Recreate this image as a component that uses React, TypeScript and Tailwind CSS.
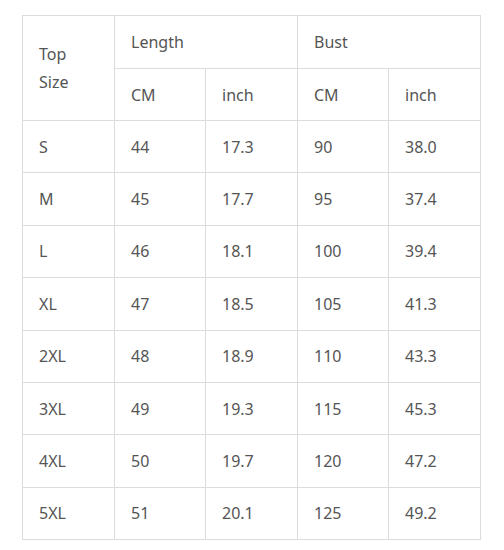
const rows = [
  ["S", "44", "17.3", "90", "38.0"],
  ["M", "45", "17.7", "95", "37.4"],
  ["L", "46", "18.1", "100", "39.4"],
  ["XL", "47", "18.5", "105", "41.3"],
  ["2XL", "48", "18.9", "110", "43.3"],
  ["3XL", "49", "19.3", "115", "45.3"],
  ["4XL", "50", "19.7", "120", "47.2"],
  ["5XL", "51", "20.1", "125", "49.2"],
]

const cell = "border border-[#dcdcdc] px-4 align-middle"

export default function App() {
  return (
    <div className="min-h-[550px] bg-white pl-[22px] pt-[15px] font-['Noto_Sans',sans-serif] text-[16px] text-[#555]">
      <table className="w-[458px] table-fixed border-collapse">
        <colgroup>
          <col className="w-[92px]" />
          <col className="w-[91px]" />
          <col className="w-[92px]" />
          <col className="w-[91px]" />
          <col className="w-[92px]" />
        </colgroup>
        <thead>
          <tr className="h-[53px]">
            <th rowSpan={2} className={`${cell} text-left font-normal leading-[28px]`}>
              Top<br />Size
            </th>
            <th colSpan={2} className={`${cell} text-left font-normal`}>Length</th>
            <th colSpan={2} className={`${cell} text-left font-normal`}>Bust</th>
          </tr>
          <tr className="h-[52px]">
            <th className={`${cell} text-left font-normal`}>CM</th>
            <th className={`${cell} text-left font-normal`}>inch</th>
            <th className={`${cell} text-left font-normal`}>CM</th>
            <th className={`${cell} text-left font-normal`}>inch</th>
          </tr>
        </thead>
        <tbody>
          {rows.map((r) => (
            <tr key={r[0]} className="h-[52.4px]">
              {r.map((v, i) => (
                <td key={i} className={cell}>{v}</td>
              ))}
            </tr>
          ))}
        </tbody>
      </table>
    </div>
  )
}
